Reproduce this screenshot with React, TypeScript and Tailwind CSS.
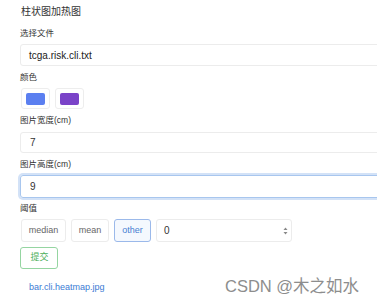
import React from "react";

const font = { fontFamily: '"Liberation Sans", "Noto Sans CJK SC", sans-serif' };

function Label({ text, h }: { text: string; h: string }) {
  return (
    <div className={`flex items-center text-[8.5px] text-[#333] ${h}`}>{text}</div>
  );
}

function Swatch({ color }: { color: string }) {
  return (
    <div className="flex h-[21px] w-[29px] items-center justify-center rounded-[3px] border border-[#ededed] bg-white">
      <div className={`mt-[1px] h-[12px] w-[19px] rounded-[2px] ${color}`} />
    </div>
  );
}

export default function App() {
  return (
    <div
      className="relative h-[300px] w-[377px] overflow-hidden bg-white pl-[20px]"
      style={font}
    >
      <div className="flex h-[22px] items-center pl-px text-[10px] text-[#333]">
        柱状图加热图
      </div>
      <Label text="选择文件" h="h-[22px]" />
      <div className="flex h-[22px] w-[420px] items-center rounded-[3px] border border-[#ececec] pl-[8px] text-[10px] text-[#222]">
        tcga.risk.cli.txt
      </div>
      <Label text="颜色" h="h-[22px]" />
      <div className="flex h-[21px] gap-[5px] pl-px">
        <Swatch color="bg-[#5b7ff0]" />
        <Swatch color="bg-[#7a43c8]" />
      </div>
      <Label text="图片宽度(cm)" h="h-[23px]" />
      <div className="flex h-[21px] w-[420px] items-center rounded-[3px] border border-[#ececec] pl-[9px] text-[10px] text-[#333]">
        7
      </div>
      <Label text="图片高度(cm)" h="h-[22px]" />
      <div className="flex h-[23px] w-[420px] items-center rounded-[3px] border border-[#a8c6ee] pl-[9px] text-[10px] text-[#333] shadow-[0_0_0_2px_#d3e2f7]">
        9
      </div>
      <Label text="阈值" h="h-[21px]" />
      <div className="flex h-[23px] gap-[5px] pl-px text-[9px]">
        <div className="flex w-[45px] items-center justify-center rounded-[3px] border border-[#ececec] text-[#666]">
          median
        </div>
        <div className="flex w-[38px] items-center justify-center rounded-[3px] border border-[#ececec] text-[#666]">
          mean
        </div>
        <div className="flex w-[37px] items-center justify-center rounded-[3px] border border-[#9bb9ea] bg-[#f4f8fe] text-[#4a7fd2]">
          other
        </div>
        <div className="flex w-[136px] items-center justify-between rounded-[3px] border border-[#ececec] pl-[7px] pr-[3px] text-[10px] text-[#333]">
          <span>0</span>
          <svg width="5" height="10" viewBox="0 0 5 10">
            <path d="M2.5 1.5 L4.5 4 L0.5 4 Z" fill="#888" />
            <path d="M2.5 8.5 L4.5 6 L0.5 6 Z" fill="#888" />
          </svg>
        </div>
      </div>
      <div className="mt-[5px] flex h-[22px] w-[38px] items-center justify-center rounded-[3px] border border-[#95d5a1] pl-px text-[9px] text-[#4caf59]">
        提交
      </div>
      <div className="pl-[9px] pt-[12px] text-[9px] text-[#3b7bd4]">bar.cli.heatmap.jpg</div>
      <div className="absolute left-[225px] top-[274px] text-[16.5px] text-[#8d8d8d]">
        CSDN @木之如水
      </div>
    </div>
  );
}
